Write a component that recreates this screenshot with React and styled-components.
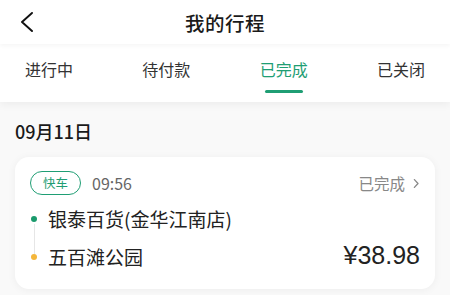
import React from "react";
import styled, { createGlobalStyle } from "styled-components";

const GREEN = "#1f9e74";

const Global = createGlobalStyle`
  html, body {
    margin: 0;
    padding: 0;
    background: #f9f9f9;
    font-family: "Noto Sans CJK SC", "Noto Sans", sans-serif;
  }
`;

const Page = styled.div`
  width: 450px;
  height: 295px;
  overflow: hidden;
  background: #f9f9f9;
`;

const Header = styled.div`
  position: relative;
  z-index: 2;
  height: 44px;
  display: flex;
  align-items: center;
  justify-content: center;
  background: #fff;
  box-shadow: 0 2px 4px rgba(0, 0, 0, 0.04);

  >h1 {
    margin: 0;
    font-size: 19.5px;
    font-weight: 500;
    color: #1a1a1a;
    letter-spacing: 0.5px;
  }
`;

const Back = styled.div`
  position: absolute;
  left: 20px;
  top: 12px;
  width: 14px;
  height: 20px;
`;

const Tabs = styled.div`
  position: relative;
  z-index: 1;
  height: 58px;
  display: flex;
  justify-content: space-between;
  padding: 0 25px;
  background: #fff;
  box-shadow: 0 3px 8px rgba(0, 0, 0, 0.05);
`;

const Tab = styled.div`
  position: relative;
  padding-top: 13px;
  font-size: 16px;
  color: ${p => (p.active ? GREEN : "#333")};

  &::after {
    content: "";
    display: ${p => (p.active ? "block" : "none")};
    position: absolute;
    bottom: 9px;
    left: 50%;
    width: 38px;
    height: 3px;
    margin-left: -19px;
    border-radius: 2px;
    background: ${GREEN};
  }
`;

const Body = styled.div`
  padding: 14px 15px 0;
`;

const DateTitle = styled.div`
  font-size: 18px;
  font-weight: 500;
  color: #1a1a1a;
  height: 30px;
  line-height: 30px;
  margin-bottom: 11px;
`;

const Card = styled.div`
  background: #fff;
  border-radius: 14px;
  box-shadow: 0 1px 8px rgba(0, 0, 0, 0.05);
  padding: 13px 15px 20px 15px;
`;

const CardTop = styled.div`
  display: flex;
  align-items: center;
  height: 26px;
`;

const Tag = styled.span`
  box-sizing: border-box;
  height: 24px;
  padding: 0 12px;
  border: 1px solid ${GREEN};
  border-radius: 12px;
  font-size: 12.5px;
  line-height: 22px;
  color: ${GREEN};
`;

const Time = styled.span`
  margin-left: 11px;
  font-size: 16px;
  color: #666;
`;

const Status = styled.span`
  margin-left: auto;
  display: flex;
  align-items: center;
  gap: 7px;
  font-size: 15.5px;
  color: #888;
`;

const Route = styled.div`
  margin-top: 10px;
  display: flex;
  align-items: flex-end;
`;

const Stops = styled.div`
  flex: 1;
  display: flex;
  flex-direction: column;
  gap: 13px;
`;

const Stop = styled.div`
  position: relative;
  padding-left: 18px;
  font-size: 19px;
  line-height: 25px;
  color: #222;

  &::before {
    content: "";
    position: absolute;
    left: 1px;
    top: 10px;
    width: 6px;
    height: 6px;
    border-radius: 50%;
    background: ${p => p.color};
  }

  &:first-child::after {
    content: "";
    position: absolute;
    left: 3.5px;
    top: 18px;
    width: 1px;
    height: 30px;
    background: #e6e6e6;
  }
`;

const Price = styled.div`
  font-family: "Liberation Sans", Arial, sans-serif;
  font-size: 25px;
  line-height: 27px;
  color: #222;
`;

const Chevron = ({ w = 10, h = 16, stroke = "#888", width = 1.3, dir = "right" }) => (
  <svg width={w} height={h} viewBox={`0 0 ${w} ${h}`} fill="none">
    <path
      d={
        dir === "right"
          ? `M${w * 0.3} ${h * 0.2}L${w * 0.75} ${h / 2}L${w * 0.3} ${h * 0.8}`
          : `M${w - 2} 1L2 ${h / 2}L${w - 2} ${h - 1}`
      }
      stroke={stroke}
      strokeWidth={width}
      strokeLinecap="round"
      strokeLinejoin="round"
    />
  </svg>
);

const tabs = ["进行中", "待付款", "已完成", "已关闭"];

export default function App() {
  return (
    <Page>
      <Global />
      <Header>
        <Back>
          <Chevron w={14} h={20} stroke="#111" width={1.9} dir="left" />
        </Back>
        <h1>我的行程</h1>
      </Header>
      <Tabs>
        {tabs.map(t => (
          <Tab key={t} active={t === "已完成"}>{t}</Tab>
        ))}
      </Tabs>
      <Body>
        <DateTitle>09月11日</DateTitle>
        <Card>
          <CardTop>
            <Tag>快车</Tag>
            <Time>09:56</Time>
            <Status>
              已完成
              <Chevron w={8} h={13} />
            </Status>
          </CardTop>
          <Route>
            <Stops>
              <Stop color="#1a9a6c">银泰百货(金华江南店)</Stop>
              <Stop color="#f4b63a">五百滩公园</Stop>
            </Stops>
            <Price>¥38.98</Price>
          </Route>
        </Card>
      </Body>
    </Page>
  );
}
